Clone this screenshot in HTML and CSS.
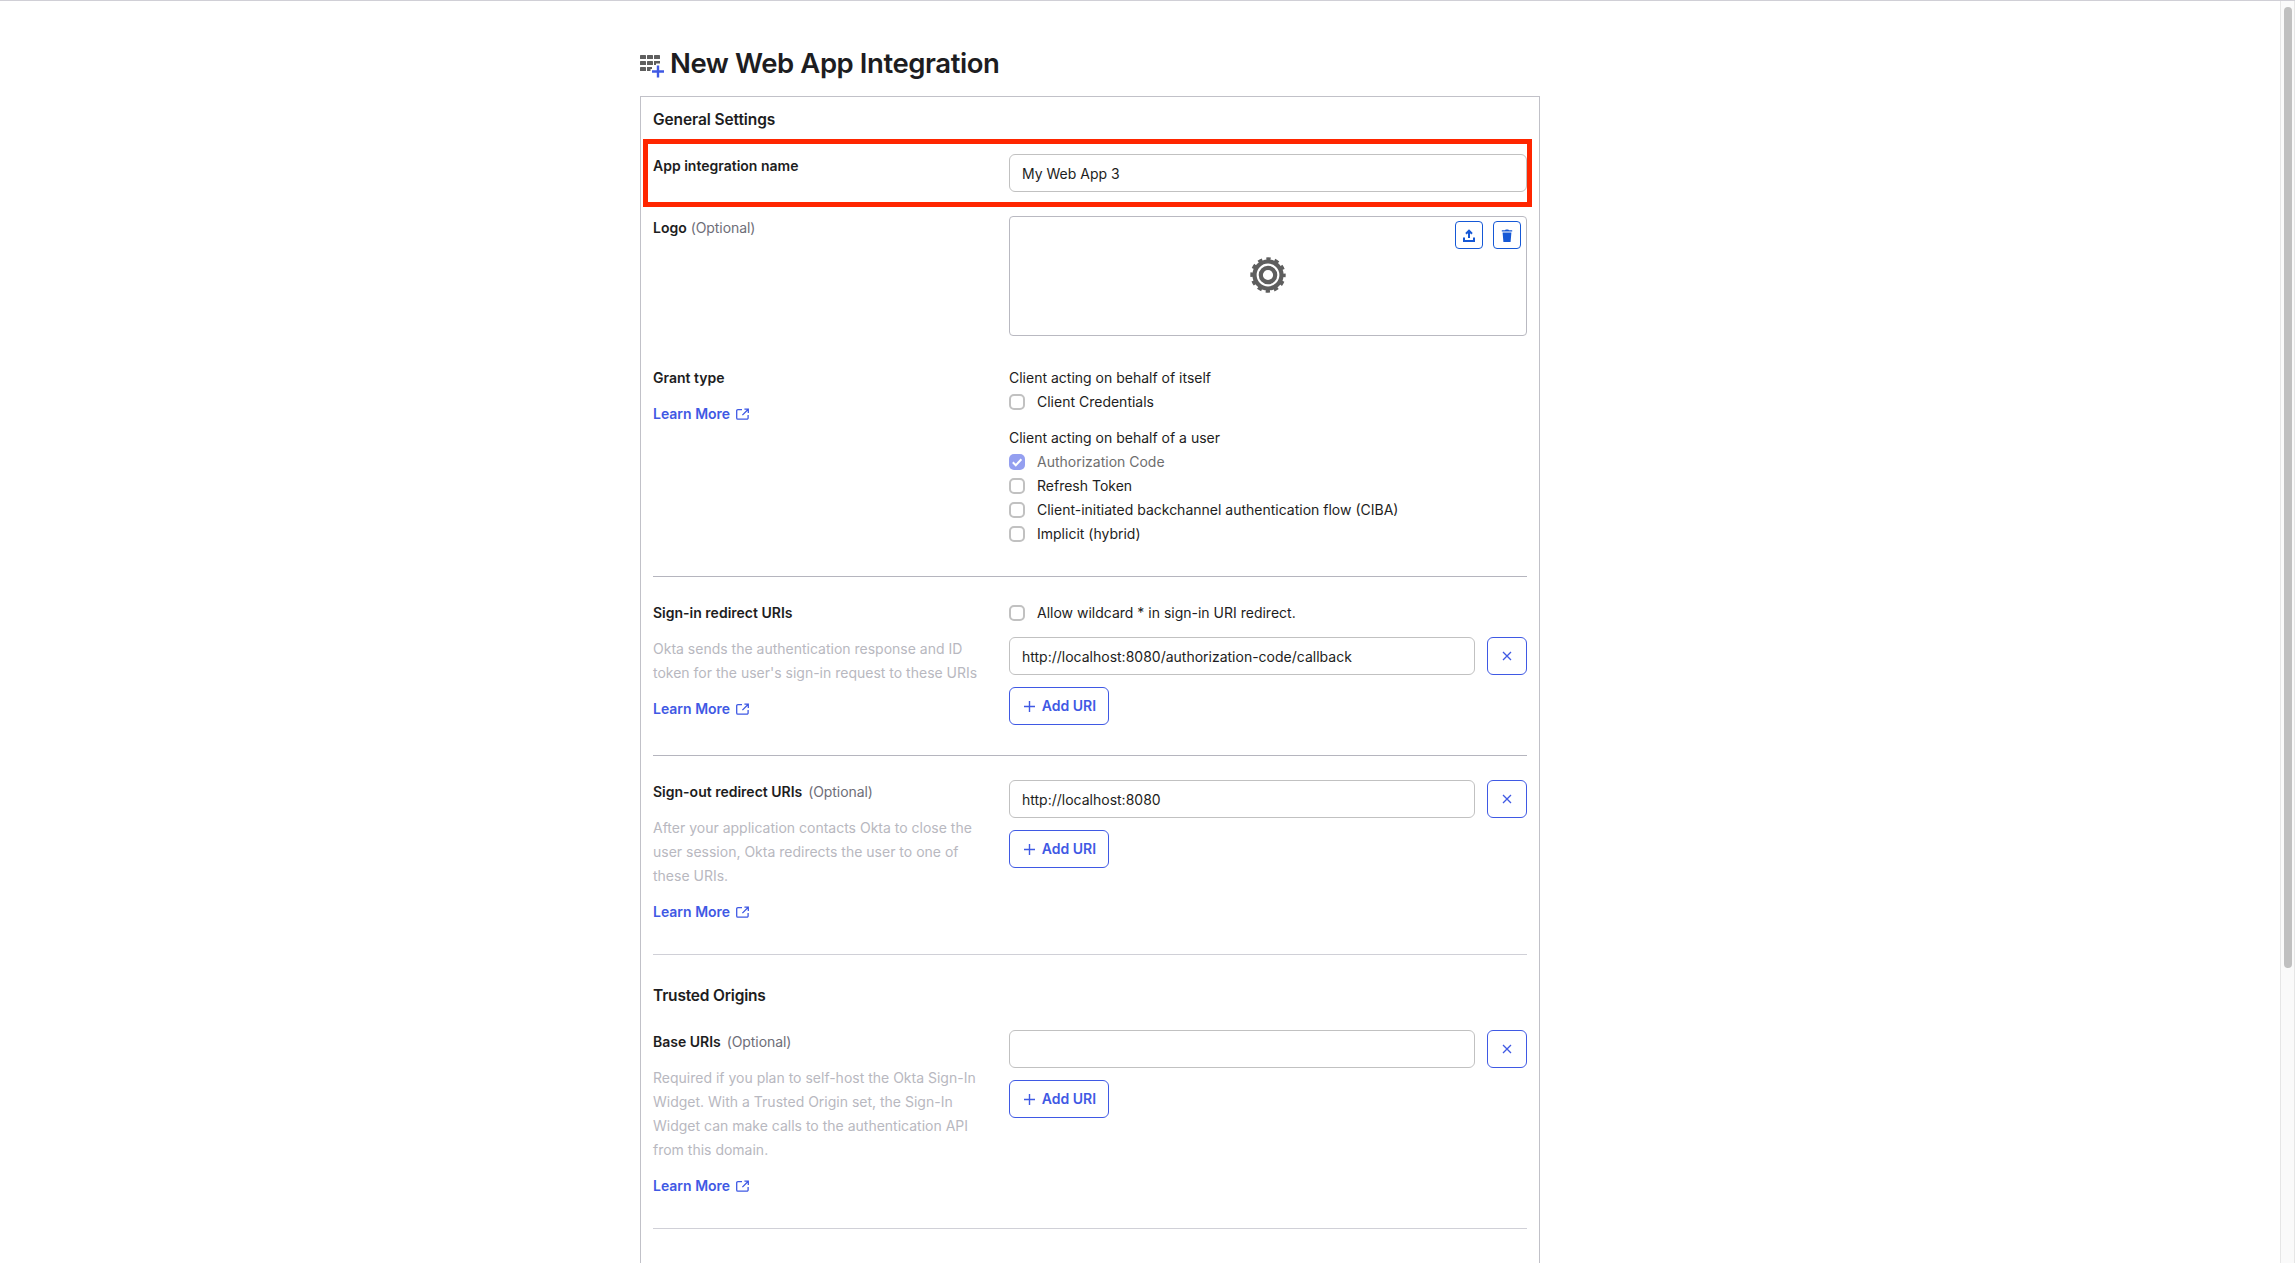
FILE: index.html
```html
<!DOCTYPE html>
<html lang="en">
<head>
<meta charset="utf-8">
<title>New Web App Integration</title>
<link rel="stylesheet" href="styles.css">
</head>
<body>
<svg class="sprite" aria-hidden="true">
  <symbol id="i-ext" viewBox="0 0 13 12"><path d="M6 1.600H1.900A1.200 1.200 0 0 0 .7 2.800v7.200a1.200 1.200 0 0 0 1.200 1.200h9a1.200 1.200 0 0 0 1.200-1.200V7M8.400 1.200h3.900v3.900M12 1.500 6.400 7.100" fill="none" stroke="currentColor" stroke-width="1.300"/></symbol>
  <symbol id="i-x" viewBox="0 0 10 10"><path d="M1 1l8 8M9 1L1 9" fill="none" stroke="currentColor" stroke-width="1.300"/></symbol>
  <symbol id="i-plus" viewBox="0 0 11 11"><path d="M5.500 0v11M0 5.500h11" fill="none" stroke="currentColor" stroke-width="1.400"/></symbol>
</svg>
<div class="viewport">
  <main class="page">
    <header class="title-row">
      <svg class="app-icon" viewBox="0 0 24 24">
        <g fill="#5e5e5e"><rect x="0" y="1" width="6" height="4" rx=".6"/><rect x="7" y="1" width="6" height="4" rx=".6"/><rect x="14" y="1" width="6" height="4" rx=".6"/><rect x="0" y="7" width="6" height="4" rx=".6"/><rect x="7" y="7" width="6" height="4" rx=".6"/><path d="M14 7h6v2.400h-4V11h-2z"/><rect x="0" y="13" width="6" height="4" rx=".6"/><path d="M7 13h5v2h-1.500v2H7z"/></g>
        <path d="M18 11.500v12M12 17.500h12" stroke="#3f59e4" stroke-width="2.400" fill="none"/>
      </svg>
      <h1 class="title">New Web App Integration</h1>
    </header>
    <form class="panel">
      <h2 class="section-title">General Settings</h2>
      <div class="row row-name">
        <div class="label"><b>App integration name</b></div>
        <div class="field"><input class="input" value="My Web App 3"></div>
        <span class="highlight"></span>
      </div>
      <div class="row row-logo">
        <div class="label"><b>Logo</b> <span class="opt">(Optional)</span></div>
        <div class="field logo-box">
          <svg class="gear" viewBox="-18 -18 36 36"><circle r="13.500" fill="none" stroke="#5e5e5e" stroke-width="4.200"/><circle r="16.200" fill="none" stroke="#5e5e5e" stroke-width="3" stroke-dasharray="4.400 4.082" stroke-dashoffset="2.200"/><circle r="7.200" fill="none" stroke="#5e5e5e" stroke-width="4.200"/></svg>
          <div class="logo-actions">
            <span class="icon-btn"><svg viewBox="0 0 12 13"><path d="M6 9V2M3 4.800 6 1.600l3 3.200M1 8.500V12h10V8.500" fill="none" stroke="#1558d6" stroke-width="2"/></svg></span>
            <span class="icon-btn"><svg viewBox="0 0 12 13"><path d="M.8 1.200H4L4.800.4h2.400l.8.800h3.200v1.400H.8zM1.600 3.600h8.800L9.600 13H2.400z" fill="#1558d6"/></svg></span>
          </div>
        </div>
      </div>
      <div class="row row-grant">
        <div class="label"><b>Grant type</b><a class="learn">Learn More <svg><use href="#i-ext"/></svg></a></div>
        <div class="field">
          <p>Client acting on behalf of itself</p>
          <label class="check"><i class="box"></i>Client Credentials</label>
          <p class="second">Client acting on behalf of a user</p>
          <label class="check disabled"><i class="box checked"><svg viewBox="0 0 16 16"><path d="M3.800 8.300l3 2.900 5.600-6" fill="none" stroke="#fff" stroke-width="2"/></svg></i>Authorization Code</label>
          <label class="check"><i class="box"></i>Refresh Token</label>
          <label class="check"><i class="box"></i>Client-initiated backchannel authentication flow (CIBA)</label>
          <label class="check"><i class="box"></i>Implicit (hybrid)</label>
        </div>
      </div>
      <div class="row row-signin">
        <div class="label"><b>Sign-in redirect URIs</b>
          <p class="hint">Okta sends the authentication response and ID<br>token for the user's sign-in request to these URIs</p>
          <a class="learn">Learn More <svg><use href="#i-ext"/></svg></a></div>
        <div class="field">
          <label class="check wild"><i class="box"></i>Allow wildcard * in sign-in URI redirect.</label>
          <div class="uri"><input class="input" value="http://localhost:8080/authorization-code/callback"><span class="remove"><svg><use href="#i-x"/></svg></span></div>
          <span class="add"><svg><use href="#i-plus"/></svg>Add URI</span>
        </div>
      </div>
      <div class="row row-signout">
        <div class="label"><b>Sign-out redirect URIs</b> <span class="opt wide">(Optional)</span>
          <p class="hint">After your application contacts Okta to close the<br>user session, Okta redirects the user to one of<br>these URIs.</p>
          <a class="learn">Learn More <svg><use href="#i-ext"/></svg></a></div>
        <div class="field">
          <div class="uri"><input class="input" value="http://localhost:8080"><span class="remove"><svg><use href="#i-x"/></svg></span></div>
          <span class="add"><svg><use href="#i-plus"/></svg>Add URI</span>
        </div>
      </div>
      <h2 class="section-title trusted">Trusted Origins</h2>
      <div class="row row-base">
        <div class="label"><b>Base URIs</b> <span class="opt wide">(Optional)</span>
          <p class="hint">Required if you plan to self-host the Okta Sign-In<br>Widget. With a Trusted Origin set, the Sign-In<br>Widget can make calls to the authentication API<br>from this domain.</p>
          <a class="learn">Learn More <svg><use href="#i-ext"/></svg></a></div>
        <div class="field">
          <div class="uri"><input class="input" value=""><span class="remove"><svg><use href="#i-x"/></svg></span></div>
          <span class="add"><svg><use href="#i-plus"/></svg>Add URI</span>
        </div>
      </div>
    </form>
  </main>
  <div class="scrollbar"><div class="thumb"></div></div>
</div>
</body>
</html>
```
FILE: styles.css
```css
* { box-sizing: border-box; }
body { margin: 0; background: #fff; color: #1d1d21; font: 14px/24px Inter, "Liberation Sans", sans-serif; }
p, h1, h2 { margin: 0; }
b { font-weight: 600; }
.sprite { display: none; }
.viewport { display: flex; height: 1263px; overflow: hidden; border-top: 1px solid #d0cfd6; }
.page { flex: 1; padding: 42px 740px 0 640px; }
.title-row { display: flex; gap: 6px; height: 53px; }
.app-icon { width: 24px; height: 24px; margin-top: 11px; }
.title { font-size: 27.5px; line-height: 40px; font-weight: 560; letter-spacing: -.43px; white-space: nowrap; }
.panel { width: 900px; height: 1300px; padding: 10px 12px; border: 1px solid #c1c1c8; }
.section-title { font-size: 15.5px; font-weight: 560; line-height: 24px; letter-spacing: -.1px; }
.panel > .section-title:first-child { padding-top: 1px; }
.row { display: grid; grid-template-columns: 356px 518px; position: relative; }
.row-name { margin-top: 22px; height: 62px; }
.highlight { position: absolute; left: -10px; top: -15px; width: 889px; height: 68px; border: 5px solid #ff2600; }
.input { display: block; width: 100%; height: 38px; padding: 0 12px; border: 1px solid #c1c1c1; border-radius: 6px; background: #fff; color: #1d1d21; font: inherit; outline: 0; }
.row-logo { height: 150px; }
.logo-box { height: 120px; padding-bottom: 2px; border: 1px solid #b9b9c1; border-radius: 4px; position: relative; display: grid; place-items: center; }
.gear { width: 36px; height: 36px; }
.logo-actions { position: absolute; top: 4px; right: 5px; display: flex; gap: 10px; }
.icon-btn { width: 28px; height: 28px; border: 1px solid #1558d6; border-radius: 4px; display: grid; place-items: center; }
.icon-btn svg { width: 12px; height: 13px; }
.opt { color: #6e6e78; letter-spacing: -.08px; }
.opt.wide { margin-left: 2px; }
.row-grant { height: 211px; border-bottom: 1px solid #b5b5be; }
.learn { display: flex; align-items: center; gap: 6px; margin-top: 12px; color: #3f59e4; font-weight: 600; }
.learn svg { width: 13px; height: 12px; }
.check { display: flex; align-items: center; }
.second { margin-top: 12px; }
.box { width: 16px; height: 16px; margin-right: 12px; border: 2px solid #c1c1c1; border-radius: 5px; }
.box.checked { border: 0; background: #949ff0; }
.box svg { display: block; }
.disabled { color: #6e6e6e; }
.hint { margin-top: 12px; color: #b8b8c0; white-space: nowrap; }
.row-signin { margin-top: 24px; height: 155px; border-bottom: 1px solid #b5b5be; }
.wild { margin-bottom: 12px; }
.uri { display: grid; grid-template-columns: 466px 40px; gap: 12px; margin-bottom: 12px; }
.remove, .add { display: flex; align-items: center; justify-content: center; height: 38px; border: 1px solid #3f59e4; border-radius: 6px; color: #3f59e4; }
.remove svg { width: 10px; height: 10px; }
.add { width: 100px; gap: 7px; padding-left: 2px; font-weight: 600; }
.add svg { width: 11px; height: 11px; }
.row-signout { margin-top: 24px; height: 175px; border-bottom: 1px solid #d0d0d7; }
.trusted { margin-top: 29px; letter-spacing: -.2px; }
.row-base { margin-top: 22px; height: 199px; border-bottom: 1px solid #d0d0d7; }
.scrollbar { width: 15px; border: solid #e6e6e6; border-width: 0 1px; background: #fafafa; padding: 6px 2px 0 3px; }
.thumb { width: 8px; height: 961px; border-radius: 4px; background: #c0c0c0; }
```
